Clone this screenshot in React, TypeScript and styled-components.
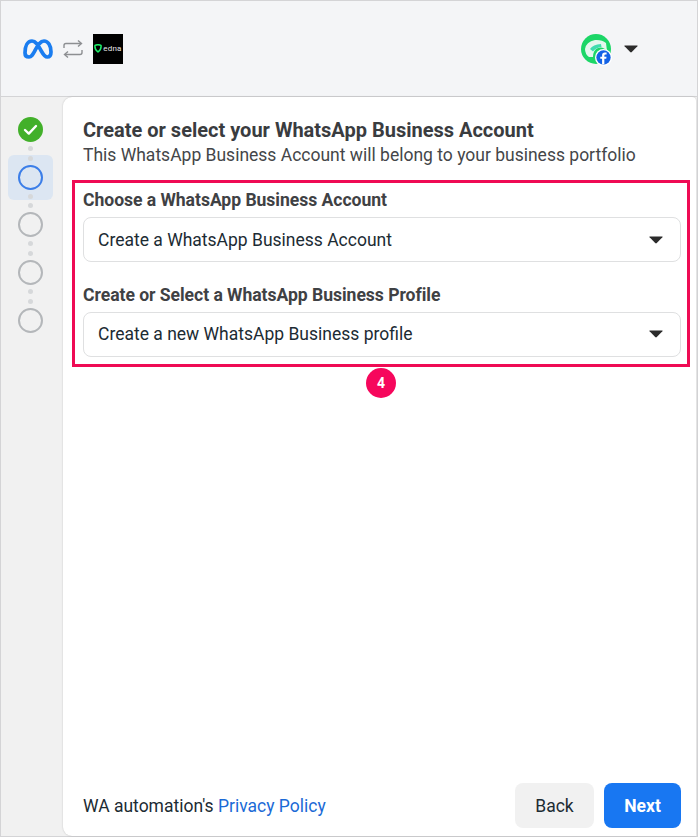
import React from 'react';
import styled, { createGlobalStyle } from 'styled-components';

const GlobalStyle = createGlobalStyle`
  html, body {
    margin: 0;
    padding: 0;
    background: #fff;
  }
  body {
    font-family: Roboto, "Liberation Sans", sans-serif;
    color: #1c2b33;
  }
  * {
    box-sizing: border-box;
  }
`;

const Frame = styled.div`
  position: relative;
  width: 698px;
  height: 837px;
  display: flex;
  flex-direction: column;
  background: #f1f1f1;
  border: 1px solid #d4d4d6;
`;

const Header = styled.header`
  height: 96px;
  flex: none;
  display: flex;
  align-items: center;
  padding-left: 22px;
  background: #f4f5f7;
  border-bottom: 1px solid #d4d4d6;
`;

const Brand = styled.div`
  display: flex;
  align-items: center;
`;

const SwapIcon = styled.svg`
  margin: 0 10px;
`;

const EdnaLogo = styled.div`
  width: 30px;
  height: 30px;
  background: #000;
  display: flex;
  align-items: center;
  justify-content: center;
  gap: 1px;
`;

const EdnaText = styled.span`
  font-size: 8px;
  line-height: 1;
  color: #e8e8e8;
  letter-spacing: 0.2px;
`;

const Account = styled.div`
  margin-left: auto;
  margin-right: 59px;
  display: flex;
  align-items: center;
  gap: 13px;
`;

const AvatarWrap = styled.div`
  position: relative;
  width: 30px;
  height: 30px;
`;

const FbBadge = styled.svg`
  position: absolute;
  right: -1px;
  bottom: -2px;
  border-radius: 50%;
  background: #fff;
`;

const Body = styled.div`
  flex: 1;
  min-height: 0;
  display: flex;
`;

const Sidebar = styled.nav`
  width: 62px;
  flex: none;
  padding: 10px 0 0 7px;
  display: flex;
  flex-direction: column;
  gap: 2.7px;
`;

const Step = styled.div<{ $active?: boolean }>`
  width: 45px;
  height: 45px;
  border-radius: 6px;
  padding: 1px 0;
  display: flex;
  flex-direction: column;
  align-items: center;
  justify-content: space-between;
  background: ${(p) => (p.$active ? '#dce6f2' : 'transparent')};
`;

const Dot = styled.span<{ $hidden?: boolean }>`
  width: 5px;
  height: 5px;
  flex: none;
  border-radius: 50%;
  background: ${(p) => (p.$hidden ? 'transparent' : '#d6d8da')};
`;

const Ring = styled.span<{ $active?: boolean }>`
  width: 25px;
  height: 25px;
  flex: none;
  border-radius: 50%;
  border: 2.75px solid ${(p) => (p.$active ? '#3b7ee8' : '#b4b7ba')};
`;

const Card = styled.main`
  position: relative;
  flex: 1;
  margin-right: 1px;
  display: flex;
  flex-direction: column;
  background: #fff;
  border-top-left-radius: 9px;
  border-top-right-radius: 4px;
  border-bottom-left-radius: 9px;
  box-shadow: 0 0 2px rgba(0, 0, 0, 0.2);
  padding: 21px 15px 8px 20px;
`;

const Title = styled.h1`
  margin: 0;
  font-size: 20px;
  line-height: 24px;
  font-weight: 700;
  color: #3a3c3f;
`;

const Subtitle = styled.p`
  margin: 2px 0 0;
  font-size: 17.5px;
  line-height: 22px;
  color: #444649;
`;

const Field = styled.div`
  margin-top: 23px;
  &:first-of-type {
    margin-top: 24px;
  }
`;

const Label = styled.label`
  display: block;
  font-size: 17.6px;
  line-height: 21px;
  font-weight: 700;
  letter-spacing: -0.05px;
  color: #3f4144;
  margin-bottom: 6px;
`;

const Select = styled.div<{ $lift?: boolean }>`
  height: 45px;
  display: flex;
  align-items: center;
  justify-content: space-between;
  padding: ${(p) => (p.$lift ? '0 17px 1px 14px' : '0 17px 0 14px')};
  font-size: 17.5px;
  color: #1c2b33;
  background: #fff;
  border: 1px solid #dfe0e1;
  border-radius: 8px;
`;

const Highlight = styled.div`
  position: absolute;
  left: 9px;
  top: 83px;
  width: 618px;
  height: 187px;
  border: 3px solid #ef0b54;
  pointer-events: none;
`;

const Badge = styled.div`
  position: absolute;
  left: 303px;
  top: 271px;
  width: 30px;
  height: 30px;
  border-radius: 50%;
  background: #f6075c;
  color: #fff;
  font-size: 14px;
  font-weight: 700;
  display: flex;
  align-items: center;
  justify-content: center;
`;

const Footer = styled.footer`
  margin-top: auto;
  display: flex;
  align-items: center;
  justify-content: space-between;
`;

const Policy = styled.span`
  font-size: 17.5px;
  color: #1c2b33;
`;

const PolicyLink = styled.a`
  color: #1b6ad6;
  text-decoration: none;
`;

const Actions = styled.div`
  display: flex;
  gap: 10px;
`;

const Button = styled.button<{ $primary?: boolean }>`
  height: 45px;
  width: ${(p) => (p.$primary ? '77px' : '79px')};
  border: 0;
  border-radius: 8px;
  font-family: inherit;
  font-size: 17.5px;
  font-weight: ${(p) => (p.$primary ? 700 : 400)};
  color: ${(p) => (p.$primary ? '#fff' : '#1c2b33')};
  background: ${(p) => (p.$primary ? '#1877f2' : '#f1f1f1')};
`;

const Caret = () => (
  <svg width="14" height="8" viewBox="0 0 14 8">
    <path d="M0.6 0.6 H13.4 Q13.8 0.6 13.4 1.2 L7.8 7 Q7 7.8 6.2 7 L0.6 1.2 Q0.2 0.6 0.6 0.6 Z" fill="#2b2b2b" />
  </svg>
);

const MetaMark = () => (
  <svg width="30" height="20" viewBox="0 0 30 20">
    <path
      d="M2 14 C2 7 4.5 2 9 2 C13 2 15.5 7 18 11.5 C20.5 16 22 18 24.2 18 C26.8 18 28 16 28 13 C28 6.5 25 2 21 2 C17 2 14.5 7 12 11.5 C9.5 16 8.5 18 6 18 C3.5 18 2 16.5 2 14 Z"
      fill="none"
      stroke="#1a7df0"
      strokeWidth="3.7"
      strokeLinejoin="round"
    />
  </svg>
);

const Swap = () => (
  <SwapIcon width="20" height="20" viewBox="0 0 20 20" fill="none" stroke="#8d8f92" strokeWidth="1.4">
    <path d="M1 9 V6.5 Q1 4.5 3 4.5 H18" />
    <path d="M15 1.5 L18.5 4.5 L15 7.5" />
    <path d="M19 11 V13.5 Q19 15.5 17 15.5 H2" />
    <path d="M5 12.5 L1.5 15.5 L5 18.5" />
  </SwapIcon>
);

const Shield = () => (
  <svg width="8" height="9" viewBox="0 0 8 9">
    <path d="M1 1.4 Q4 0 7 1.4 Q7.6 5.6 4 8 Q0.4 5.6 1 1.4 Z" fill="none" stroke="#1ef06a" strokeWidth="1.5" />
  </svg>
);

const CheckStep = () => (
  <svg width="25" height="25" viewBox="0 0 25 25">
    <circle cx="12.5" cy="12.5" r="12.5" fill="#42b02a" />
    <path d="M7 13 L10.8 16.6 L18 9" fill="none" stroke="#fff" strokeWidth="2.4" strokeLinecap="round" strokeLinejoin="round" />
  </svg>
);

const Avatar = () => (
  <svg width="30" height="30" viewBox="0 0 30 30">
    <circle cx="15" cy="15" r="15" fill="#1cd667" />
    <path d="M4 15 Q5 8 14 6 Q21 5.5 25 9 L26 17 Q22 12 17 14 Q12 16 12 23 L8 23 Q4 20 4 15 Z" fill="#e4f7ee" />
    <path d="M9 15 Q12 10.5 20 10 L20.5 13 Q15 13.5 12 17.5 Z" fill="#3fdcb0" />
  </svg>
);

const FacebookMark = () => (
  <FbBadge width="17" height="17" viewBox="0 0 18 18">
    <circle cx="9" cy="9" r="7.6" fill="#1463e6" />
    <path d="M9.9 16.5 V10.4 H11.9 L12.2 8.1 H9.9 V6.8 Q9.9 5.7 11 5.7 H12.3 V3.8 Q11.4 3.6 10.5 3.6 Q7.5 3.6 7.5 6.5 V8.1 H5.6 V10.4 H7.5 V16.5 Z" fill="#fff" />
  </FbBadge>
);

export default function App() {
  return (
    <>
      <GlobalStyle />
      <Frame>
        <Header>
          <Brand>
            <MetaMark />
            <Swap />
            <EdnaLogo>
              <Shield />
              <EdnaText>edna</EdnaText>
            </EdnaLogo>
          </Brand>
          <Account>
            <AvatarWrap>
              <Avatar />
              <FacebookMark />
            </AvatarWrap>
            <Caret />
          </Account>
        </Header>
        <Body>
          <Sidebar>
            <Step>
              <Dot $hidden />
              <CheckStep />
              <Dot />
            </Step>
            <Step $active>
              <Dot />
              <Ring $active />
              <Dot />
            </Step>
            <Step>
              <Dot />
              <Ring />
              <Dot />
            </Step>
            <Step>
              <Dot />
              <Ring />
              <Dot />
            </Step>
            <Step>
              <Dot />
              <Ring />
              <Dot $hidden />
            </Step>
          </Sidebar>
          <Card>
            <Title>Create or select your WhatsApp Business Account</Title>
            <Subtitle>This WhatsApp Business Account will belong to your business portfolio</Subtitle>
            <Field>
              <Label>Choose a WhatsApp Business Account</Label>
              <Select>
                Create a WhatsApp Business Account
                <Caret />
              </Select>
            </Field>
            <Field>
              <Label>Create or Select a WhatsApp Business Profile</Label>
              <Select $lift>
                Create a new WhatsApp Business profile
                <Caret />
              </Select>
            </Field>
            <Highlight />
            <Badge>4</Badge>
            <Footer>
              <Policy>
                WA automation's <PolicyLink href="#">Privacy Policy</PolicyLink>
              </Policy>
              <Actions>
                <Button>Back</Button>
                <Button $primary>Next</Button>
              </Actions>
            </Footer>
          </Card>
        </Body>
      </Frame>
    </>
  );
}
